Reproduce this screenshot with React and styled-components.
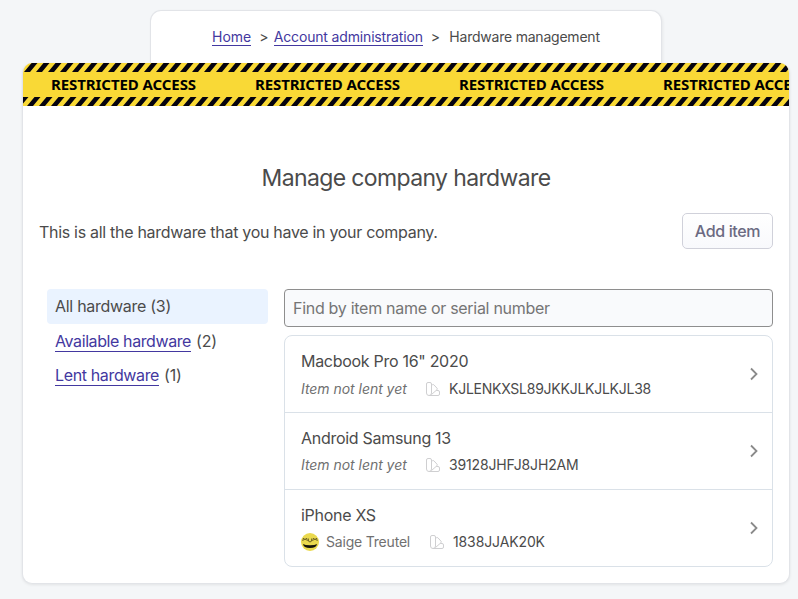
import React from "react";
import styled, { createGlobalStyle } from "styled-components";

const Global = createGlobalStyle`
  * { box-sizing: border-box; }
  body { margin: 0; background: #f4f6f8; font-family: Inter, "Liberation Sans", sans-serif; color: #4b4b4b; -webkit-font-smoothing: antialiased; }
`;
const Page = styled.div`
  height: 599px;
  overflow: hidden;
  padding: 10px 9px 0 22px;
`;
const Breadcrumb = styled.nav`
  display: flex;
  width: 512px;
  height: 53px;
  margin-left: 128px;
  padding: 17px 0 0 61px;
  background: #fff;
  border: 1px solid #e2e4e8;
  border-bottom: 0;
  border-radius: 11px 11px 0 0;
  box-shadow: 1px 1px 3px rgba(0, 0, 0, 0.06);
  font-size: 14px;
  line-height: 17px;
  white-space: nowrap;
`;
const Fit = styled.span`
  letter-spacing: ${(p) => p.$ls || 0}px;
`;
const Link = styled.a`
  height: ${(p) => p.$h || 18}px;
  color: #4338a0;
  border-bottom: 1px solid #4338a0;
  letter-spacing: ${(p) => p.$ls || 0}px;
`;
const Sep = styled.span`
  width: ${(p) => p.$w}px;
  padding-left: 8px;
`;
const Card = styled.main`
  width: 768px;
  height: 521px;
  background: #fff;
  border: 1px solid #e2e4e8;
  border-top: 0;
  border-radius: 10px;
  overflow: hidden;
  box-shadow: 0 1px 3px rgba(0, 0, 0, 0.08);
`;
const Tape = styled.div`
  height: 43px;
  background: #f9d936;
  display: flex;
  flex-direction: column;
  overflow: hidden;
`;
const Stripes = styled.svg`
  display: block;
  width: 766px;
  height: 9px;
  flex: none;
`;
const TapeText = styled.div`
  display: flex;
  height: 25px;
  padding-left: 28px;
  font: 700 15px/25px "Noto Sans", sans-serif;
  color: #000;
`;
const TapeWord = styled.span`
  flex: none;
  width: 204px;
  white-space: nowrap;
  letter-spacing: -0.08px;
`;
const Title = styled.h1`
  margin: 57px 0 0;
  font-size: 23px;
  line-height: 30px;
  font-weight: 400;
  letter-spacing: -0.63px;
  text-align: center;
`;
const Intro = styled.div`
  display: flex;
  justify-content: space-between;
  align-items: center;
  margin: 20px 16px 0;
  height: 36px;
  font-size: 16px;
`;
const IntroText = styled.p`
  margin: 2px 0 0;
  letter-spacing: -0.3px;
`;
const Button = styled.button`
  width: 91px;
  height: 36px;
  padding: 0;
  border: 1px solid #d0d1da;
  border-radius: 5px;
  background: linear-gradient(#fff, #f8f9fc);
  color: #6b6a82;
  font: 500 16px Inter, sans-serif;
  letter-spacing: -0.35px;
`;
const Columns = styled.div`
  display: grid;
  grid-template-columns: 221px 489px;
  column-gap: 16px;
  margin: 40px 16px 0 24px;
`;
const Filters = styled.ul`
  list-style: none;
  margin: 0;
  padding: 0;
  font-size: 16px;
`;
const Filter = styled.li`
  display: flex;
  gap: 5px;
  height: ${(p) => (p.$active ? 35 : 34)}px;
  padding: 7px 8px 0;
  line-height: 20px;
  border-radius: 4px;
  background: ${(p) => (p.$active ? "#eaf3ff" : "transparent")};
`;
const Search = styled.input`
  display: block;
  width: 489px;
  height: 38px;
  margin: 0 0 8px;
  padding: 0 8px;
  border: 1px solid #8e8e8e;
  border-radius: 4px;
  background: #f9fafc;
  font: 16px Inter, sans-serif;
  letter-spacing: -0.29px;
  &::placeholder { color: #757575; opacity: 1; }
`;
const List = styled.div`
  height: 232px;
  border: 1px solid #dae1e8;
  border-radius: 8px;
`;
const Name = styled.div`
  font-size: 16px;
  line-height: 20px;
  margin-bottom: 8px;
  letter-spacing: -0.29px;
`;
const Item = styled.div`
  display: flex;
  align-items: center;
  justify-content: space-between;
  height: 76px;
  padding: 0 13px 0 16px;
  &:first-child ${Name} { margin-bottom: 9px; }
  & + & { height: 77px; border-top: 1px solid #dae1e8; }
`;
const Meta = styled.div`
  display: flex;
  align-items: center;
  height: 18px;
  font-size: 14px;
  line-height: 18px;
  white-space: nowrap;
`;
const Owner = styled.span`
  display: flex;
  align-items: center;
  gap: 7px;
  width: ${(p) => p.$w}px;
  color: #707070;
  font-style: ${(p) => (p.$italic ? "italic" : "normal")};
  letter-spacing: ${(p) => (p.$italic ? -0.04 : -0.2)}px;
`;
const Serial = styled.span`
  margin-left: 8px;
  letter-spacing: ${(p) => p.$ls}px;
`;

const Pattern = ({ id, offset }) => (
  <Stripes viewBox="0 0 766 9">
    <defs>
      <pattern id={id} width="12" height="9" patternUnits="userSpaceOnUse" x={offset}>
        <path d="M0 9 L7.500 0 H13.500 L6 9Z M-12 9 L-4.500 0 H1.500 L-6 9Z" fill="#05030f" />
      </pattern>
    </defs>
    <rect width="766" height="9" fill={`url(#${id})`} />
  </Stripes>
);
const Swatch = () => (
  <svg width="16" height="16" viewBox="0 0 16 16" fill="none" stroke="#cfcfd1">
    <path d="M1.500 3a1.500 1.500 0 0 1 1.500-1.500h2A1.500 1.500 0 0 1 6.500 3v9a2.500 2.500 0 0 1-5 0z M6.500 4.500l1-.8q.8-.5 1.500.2l3 3.300q.7.8 0 1.500L6.500 13.500 M11.300 9.500h1.700a1.500 1.500 0 0 1 1.500 1.500v2a1.500 1.500 0 0 1-1.500 1.500H4" />
  </svg>
);
const Avatar = () => (
  <svg width="18" height="18" viewBox="0 0 18 18">
    <circle cx="9" cy="9" r="9" fill="#ead94e" />
    <path d="M1.800 8 2.500 5l1.500 2 1.500-2 .8 3M11.700 8l.8-3L14 7l1.500-2 .7 3M7.300 5.500q-.6 3.500 1.700 3.500t1.700-3.500" fill="none" stroke="#6b6125" />
    <path d="M2 11q2 1.300 7 1.300t7-1.300q-.5 4-7 4t-7-4" fill="#17150c" />
  </svg>
);
const Chevron = () => (
  <svg width="10" height="14" viewBox="0 0 10 14" fill="none" stroke="#8a8a8a" strokeWidth="1.800">
    <path d="M2 1.500 7.500 7 2 12.500" />
  </svg>
);

const items = [
  { name: 'Macbook Pro 16" 2020', serial: "KJLENKXSL89JKKJLKJLKJL38", w: 124, ls: -0.25 },
  { name: "Android Samsung 13", serial: "39128JHFJ8JH2AM", w: 124, ls: -0.15 },
  { name: "iPhone XS", owner: "Saige Treutel", serial: "1838JJAK20K", w: 128, ls: -0.12 },
];

export default function App() {
  return (
    <Page>
      <Global />
      <Breadcrumb>
        <Link>Home</Link>
        <Sep $w={22.5}>&gt;</Sep>
        <Link $ls={-0.16}>Account administration</Link>
        <Sep $w={26.5}>&gt;</Sep>
        <Fit $ls={-0.22}>Hardware management</Fit>
      </Breadcrumb>
      <Card>
        <Tape>
          <Pattern id="top" offset={1} />
          <TapeText>
            {[0, 1, 2, 3].map((n) => (
              <TapeWord key={n}>RESTRICTED ACCESS</TapeWord>
            ))}
          </TapeText>
          <Pattern id="bottom" offset={4} />
        </Tape>
        <Title>Manage company hardware</Title>
        <Intro>
          <IntroText>This is all the hardware that you have in your company.</IntroText>
          <Button>Add item</Button>
        </Intro>
        <Columns>
          <Filters>
            <Filter $active><Fit $ls={-0.28}>All hardware (3)</Fit></Filter>
            <Filter><Link $h={21} $ls={-0.4}>Available hardware</Link> <Fit $ls={-0.2}>(2)</Fit></Filter>
            <Filter><Link $h={21} $ls={-0.36}>Lent hardware</Link> <Fit $ls={-0.2}>(1)</Fit></Filter>
          </Filters>
          <div>
            <Search placeholder="Find by item name or serial number" />
            <List>
              {items.map((item) => (
                <Item key={item.serial}>
                  <div>
                    <Name>{item.name}</Name>
                    <Meta>
                      <Owner $w={item.w} $italic={!item.owner}>
                        {item.owner && <Avatar />}
                        {item.owner || "Item not lent yet"}
                      </Owner>
                      <Swatch />
                      <Serial $ls={item.ls}>{item.serial}</Serial>
                    </Meta>
                  </div>
                  <Chevron />
                </Item>
              ))}
            </List>
          </div>
        </Columns>
      </Card>
    </Page>
  );
}
